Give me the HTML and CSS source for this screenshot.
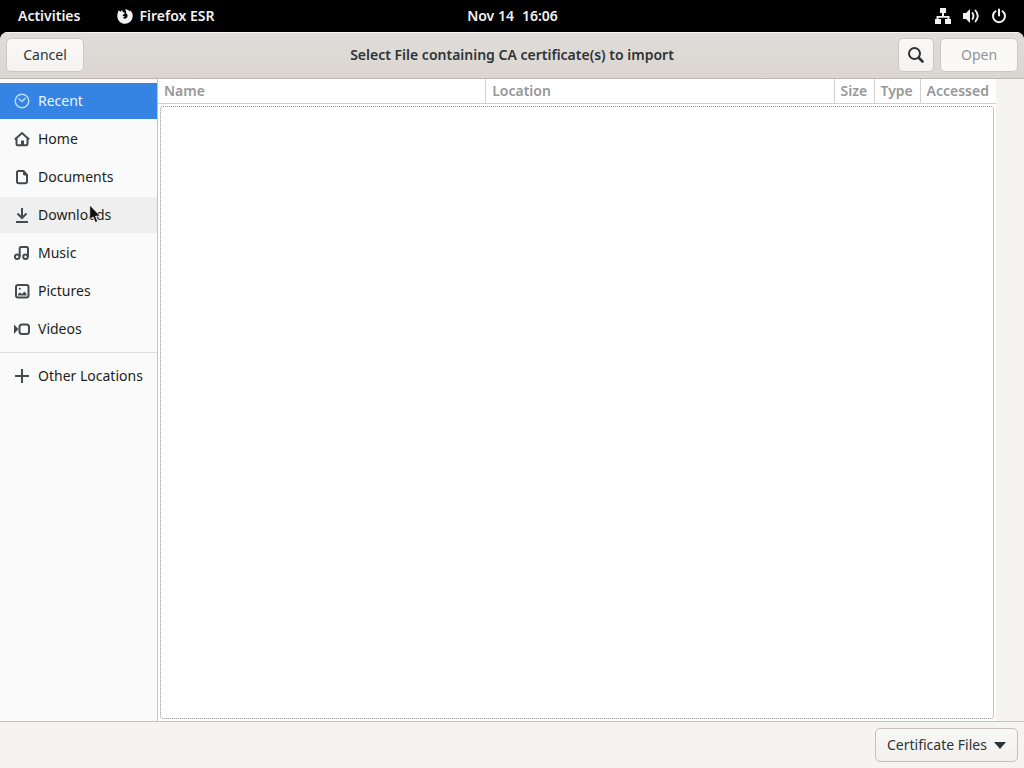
FILE: index.html
```html
<!DOCTYPE html>
<html lang="en">
<head>
<meta charset="utf-8">
<title>Select File containing CA certificate(s) to import</title>
<link rel="stylesheet" href="styles.css">
</head>
<body>
<header class="topbar">
  <div class="topbar-left">
    <button class="topbar-item" type="button">Activities</button>
    <button class="topbar-item app-menu" type="button">
      <svg width="16" height="16" viewBox="0 0 16 16"><path fill="#f2f2f2" d="M1.600 2.200 3.400 3.800 5.200 2 5.800 4.100 7.900 4.800 7.300 6.100 5.900 6.700 5.700 7.900 7.500 8 7 9.400 5.500 9.300C6.600 11.400 9.800 10.900 10.500 8.600 10.900 7 10 5.800 9 5L9.200 3.400 8 1.200C10.200 1.100 12 2.200 12.800 3.500L13 2.300C15.200 4 16 6.500 15.700 8.600 15.200 13 12 15.800 8 15.800 3.800 15.800.5 12.600.3 8.500.2 6 1 4.300 1.600 2.200Z"/></svg>
      <span>Firefox ESR</span>
    </button>
  </div>
  <button class="topbar-item clock" type="button"><span>Nov 14</span><span>16:06</span></button>
  <button class="topbar-item status" type="button" aria-label="System menu">
    <svg width="16" height="16" viewBox="0 0 16 16" fill="#f2f2f2"><path d="M5 0h6v5H9v3h5.500v3H16v5h-6v-5h2.500v-1.200h-9V11H6v5H0v-5h1.500V8H7V5H5z"/></svg>
    <svg width="16" height="16" viewBox="0 0 16 16"><path fill="#f2f2f2" d="M0 5h3l4-4v14l-4-4H0z"/><path d="M9.500 5q2 3 0 6" fill="none" stroke="#f2f2f2" stroke-width="1.800" stroke-linecap="round"/><path d="M12.500 2.500q4.500 5.500 0 11" fill="none" stroke="#f2f2f2" stroke-width="1.800" stroke-linecap="round"/></svg>
    <svg width="16" height="16" viewBox="0 0 16 16" fill="none" stroke="#f2f2f2" stroke-width="2" stroke-linecap="round"><path d="M8 1.500v6M4.500 3.300a6 6 0 1 0 7 0"/></svg>
  </button>
</header>

<div class="dialog">
  <header class="headerbar">
    <div class="header-start"><button class="button cancel" type="button">Cancel</button></div>
    <h1 class="title">Select File containing CA certificate(s) to import</h1>
    <div class="header-end">
      <button class="button search" type="button" aria-label="Search">
        <svg width="18" height="18" viewBox="0 0 18 18" fill="none" stroke="#2e3436" stroke-width="2"><circle cx="7.500" cy="7.500" r="5.500"/><path stroke-width="2.600" stroke-linecap="round" d="m12 12 3.500 3.500"/></svg>
      </button>
      <button class="button open" type="button" disabled>Open</button>
    </div>
  </header>

  <main class="content">
    <nav class="sidebar" aria-label="Places">
      <ul class="places">
        <li><a class="place selected" href="#recent"><svg class="icon" viewBox="0 0 16 16"><circle cx="8" cy="8" r="6.800"/><path d="m4.500 5.500 3.500 3 3.500-3.500"/></svg>Recent</a></li>
        <li><a class="place" href="#home"><svg class="icon thick" viewBox="0 0 16 16"><path d="M.8 8.500 8 2l7.200 6.500M2.500 7.500v5.500q0 1.300 1.300 1.300h8.400q1.300 0 1.300-1.300V7.500"/><path class="solid" d="M7 14V9.500h3V14z"/></svg>Home</a></li>
        <li><a class="place" href="#documents"><svg class="icon thick" viewBox="0 0 16 16"><path d="M4.500 2H9.500L13 6v6.500q0 1.800-1.800 1.800H4.800Q3 14.300 3 12.500v-9Q3 2 4.500 2Z"/><path class="solid" d="M9 2v3q0 1.500 1.500 1.500H13z"/></svg>Documents</a></li>
        <li><a class="place hovered" href="#downloads"><svg class="icon thick" viewBox="0 0 16 16"><path d="M8 1v10M3.500 6.500 8 11l4.500-4.500M2 15h12"/></svg>Downloads</a></li>
        <li><a class="place" href="#music"><svg class="icon thick" viewBox="0 0 16 16"><circle cx="3.200" cy="11.700" r="2.300"/><circle cx="11.500" cy="11.700" r="2.300"/><path d="M5.700 11.700V3.500Q5.700 2 7.200 2H12.500Q14 2 14 3.500v8.200"/></svg>Music</a></li>
        <li><a class="place" href="#pictures"><svg class="icon thick" viewBox="0 0 16 16"><rect x="2" y="2" width="12.500" height="12.500" rx="2"/><path class="solid" d="M4 12.500V11l2-1.500L8 11l2.500-2.500 2 2.500v1.500z"/><circle class="solid" cx="5.800" cy="5.800" r="1"/></svg>Pictures</a></li>
        <li><a class="place" href="#videos"><svg class="icon thick" viewBox="0 0 16 16"><rect x="5.500" y="3.500" width="9.500" height="9.500" rx="2.500"/><path class="solid" d="M0 3.500 4.500 8 0 13z"/></svg>Videos</a></li>
      </ul>
      <ul class="places other">
        <li><a class="place" href="#other"><svg class="icon thick" viewBox="0 0 16 16"><path d="M8 1v14M1 8h14"/></svg>Other Locations</a></li>
      </ul>
    </nav>
    <section class="browser" aria-label="Files">
      <table class="files">
        <thead><tr><th class="col-name">Name</th><th class="col-location">Location</th><th class="col-size">Size</th><th class="col-type">Type</th><th class="col-accessed">Accessed</th></tr></thead>
      </table>
      <div class="file-area" tabindex="0"></div>
    </section>
  </main>

  <footer class="actionbar">
    <div class="filter">
      <select class="filter-select" aria-label="File type"><option>Certificate Files</option></select>
      <svg class="caret" width="12" height="7" viewBox="0 0 12 7"><path fill="#2e3436" d="M0 0h12L6 7z"/></svg>
    </div>
  </footer>
</div>

<svg class="pointer" width="13" height="20" viewBox="0 0 13 20"><path d="M.7 1v15l3.400-3.100L6.300 18.500l2.500-1-2.300-5.300h5z" fill="#111" stroke="#fff" stroke-width=".8"/></svg>
</body>
</html>
```
FILE: styles.css
```css
* {
  box-sizing: border-box;
}

body {
  margin: 0;
  min-height: 100vh;
  display: flex;
  flex-direction: column;
  background: #000;
  color: #1c1f20;
  font: 14px/20px "Noto Sans", "Open Sans", sans-serif;
}

button,
select {
  font: inherit;
  color: inherit;
}

.topbar {
  display: grid;
  grid-template-columns: 1fr auto 1fr;
  align-items: center;
  height: 32px;
  padding: 0 17px 0 18px;
  color: #f2f2f2;
  font-weight: 600;
}

.topbar-left {
  display: flex;
  gap: 37px;
}

.topbar-item {
  display: flex;
  align-items: center;
  padding: 0;
  border: 0;
  background: none;
}

.app-menu {
  gap: 6px;
}

.clock {
  gap: 8px;
}

.status {
  justify-self: end;
  gap: 12px;
}

.dialog {
  flex: 1;
  display: flex;
  flex-direction: column;
  overflow: hidden;
  border-radius: 8px 8px 0 0;
  background: #f5f4f2;
}

.headerbar {
  display: grid;
  grid-template-columns: 1fr auto 1fr;
  align-items: center;
  height: 47px;
  padding: 0 6px 2px;
  border-top: 1px solid #f5f4f3;
  border-bottom: 1px solid #bfb8b1;
  background: linear-gradient(#e0dcd8, #dad6d2);
}

.title {
  margin: 0;
  color: #2e3436;
  font-size: 14px;
  font-weight: 600;
}

.header-end {
  display: flex;
  justify-content: flex-end;
  gap: 6px;
}

.button {
  height: 34px;
  padding: 0;
  border: 1px solid #cdc7c2;
  border-radius: 5px;
  background: linear-gradient(#f9f8f7, #f4f3f1);
  color: #2e3436;
}

.cancel,
.open {
  width: 78px;
}

.open {
  background: #faf9f8;
  color: #929595;
}

.search {
  display: grid;
  place-items: center;
  width: 36px;
}

.content {
  flex: 1;
  display: flex;
}

.sidebar {
  width: 158px;
  padding-top: 4px;
  border-right: 1px solid #c5c1bd;
  background: #fafafa;
}

.places {
  display: flex;
  flex-direction: column;
  gap: 2px;
  margin: 0;
  padding: 0;
  list-style: none;
}

.other {
  margin-top: 5px;
  padding-top: 5px;
  border-top: 1px solid #dedede;
}

.place {
  display: flex;
  align-items: center;
  gap: 8px;
  height: 36px;
  padding-left: 14px;
  color: inherit;
  text-decoration: none;
  white-space: nowrap;
}

.selected {
  background: #3584e4;
  color: #e9f4ff;
}

.hovered {
  background: #efefef;
}

.icon {
  width: 16px;
  height: 16px;
  fill: none;
  stroke: #464a4c;
}

.selected .icon {
  stroke: #b5dcff;
  stroke-width: 1.500;
}

.thick {
  stroke-width: 2;
}

.solid {
  fill: #464a4c;
  stroke: none;
}

.browser {
  flex: 1;
  display: flex;
  flex-direction: column;
  margin-right: 28px;
  background: #fff;
}

.files {
  width: 100%;
  table-layout: fixed;
  border-collapse: collapse;
  border-bottom: 1px solid #d3d0cd;
}

.files th {
  height: 24px;
  padding: 0 0 0 6px;
  border-right: 1px solid #d3d0cd;
  color: #969898;
  font-weight: 600;
  text-align: left;
}

.files th:last-child {
  border-right: 0;
}

.col-name {
  width: 39.1%;
}

.col-size {
  width: 40px;
}

.col-type {
  width: 46px;
}

.col-accessed {
  width: 76px;
}

.file-area {
  flex: 1;
  margin: 2px;
  border: 1px dotted #8f8f8f;
  border-radius: 3px;
  outline: 0;
}

.actionbar {
  display: flex;
  justify-content: flex-end;
  padding: 6px;
  border-top: 1px solid #c8c4c0;
}

.filter {
  display: grid;
  align-items: center;
}

.filter-select {
  grid-area: 1 / 1;
  width: 143px;
  height: 34px;
  padding: 0 0 0 11px;
  appearance: none;
  border: 1px solid #c5c0bb;
  border-radius: 5px;
  background: linear-gradient(#f8f8f7, #f1f0ee);
  color: #2e3436;
}

.caret {
  grid-area: 1 / 1;
  justify-self: end;
  margin-right: 12px;
  pointer-events: none;
}

.pointer {
  position: absolute;
  top: 204px;
  left: 89px;
}
```
